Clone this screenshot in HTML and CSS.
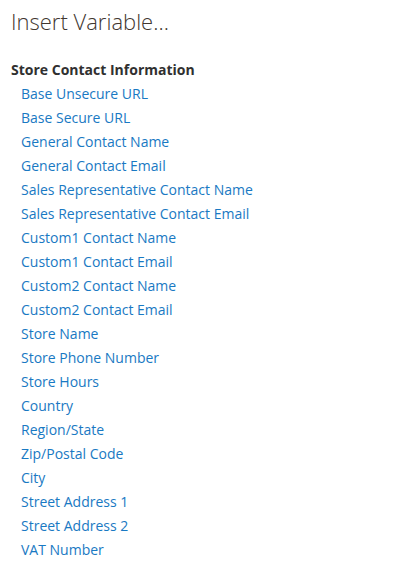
FILE: index.html
```html
<!DOCTYPE html>
<html lang="en">
<head>
    <meta charset="UTF-8">
    <title>Insert Variable</title>
    <link rel="stylesheet" href="styles.css">
</head>
<body>
    <h1 class="title">Insert Variable...</h1>
    <div class="group">
        <h2 class="group-title">Store Contact Information</h2>
        <ul class="var-list">
            <li><a href="#">Base Unsecure URL</a></li>
            <li><a href="#">Base Secure URL</a></li>
            <li><a href="#">General Contact Name</a></li>
            <li><a href="#">General Contact Email</a></li>
            <li><a href="#">Sales Representative Contact Name</a></li>
            <li><a href="#">Sales Representative Contact Email</a></li>
            <li><a href="#">Custom1 Contact Name</a></li>
            <li><a href="#">Custom1 Contact Email</a></li>
            <li><a href="#">Custom2 Contact Name</a></li>
            <li><a href="#">Custom2 Contact Email</a></li>
            <li><a href="#">Store Name</a></li>
            <li><a href="#">Store Phone Number</a></li>
            <li><a href="#">Store Hours</a></li>
            <li><a href="#">Country</a></li>
            <li><a href="#">Region/State</a></li>
            <li><a href="#">Zip/Postal Code</a></li>
            <li><a href="#">City</a></li>
            <li><a href="#">Street Address 1</a></li>
            <li><a href="#">Street Address 2</a></li>
            <li><a href="#">VAT Number</a></li>
        </ul>
    </div>
</body>
</html>
```

FILE: styles.css
```css
body {
    font-family: "Open Sans", Arial, sans-serif;
    margin: 0;
    padding: 6px 11px;
    background-color: #fff;
    color: #303030;
}

.title {
    font-size: 22px;
    font-weight: 300;
    color: #41362f;
    margin: 0 0 22px;
    line-height: 30px;
}

.group-title {
    font-size: 14px;
    font-weight: 700;
    color: #303030;
    margin: 0;
    line-height: 24px;
}

.var-list {
    list-style: none;
    margin: 0;
    padding: 0 0 0 10px;
}

.var-list li {
    line-height: 24px;
    font-size: 14px;
}

.var-list a {
    color: #1979c3;
    text-decoration: none;
}
```
